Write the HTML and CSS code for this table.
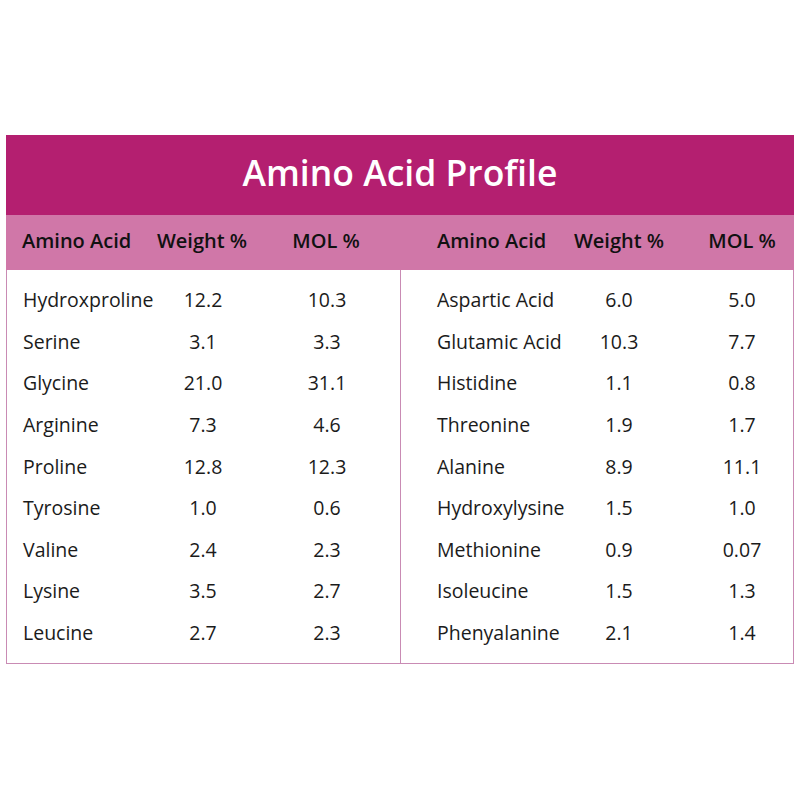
FILE: index.html
```html
<!DOCTYPE html>
<html>
<head>
<meta charset="utf-8">
<link rel="stylesheet" href="styles.css">
</head>
<body>
<div class="card">
  <div class="title">Amino Acid Profile</div>
  <div class="heads">
    <div class="grid grid-left">
      <div>Amino Acid</div><div class="num">Weight %</div><div class="num">MOL %</div>
    </div>
    <div class="grid grid-right">
      <div>Amino Acid</div><div class="num">Weight %</div><div class="num">MOL %</div>
    </div>
  </div>
  <div class="body">
    <div class="half">
      <div class="grid grid-left row"><div>Hydroxproline</div><div class="num">12.2</div><div class="num">10.3</div></div>
      <div class="grid grid-left row"><div>Serine</div><div class="num">3.1</div><div class="num">3.3</div></div>
      <div class="grid grid-left row"><div>Glycine</div><div class="num">21.0</div><div class="num">31.1</div></div>
      <div class="grid grid-left row"><div>Arginine</div><div class="num">7.3</div><div class="num">4.6</div></div>
      <div class="grid grid-left row"><div>Proline</div><div class="num">12.8</div><div class="num">12.3</div></div>
      <div class="grid grid-left row"><div>Tyrosine</div><div class="num">1.0</div><div class="num">0.6</div></div>
      <div class="grid grid-left row"><div>Valine</div><div class="num">2.4</div><div class="num">2.3</div></div>
      <div class="grid grid-left row"><div>Lysine</div><div class="num">3.5</div><div class="num">2.7</div></div>
      <div class="grid grid-left row"><div>Leucine</div><div class="num">2.7</div><div class="num">2.3</div></div>
    </div>
    <div class="half half-right">
      <div class="grid grid-right row"><div>Aspartic Acid</div><div class="num">6.0</div><div class="num">5.0</div></div>
      <div class="grid grid-right row"><div>Glutamic Acid</div><div class="num">10.3</div><div class="num">7.7</div></div>
      <div class="grid grid-right row"><div>Histidine</div><div class="num">1.1</div><div class="num">0.8</div></div>
      <div class="grid grid-right row"><div>Threonine</div><div class="num">1.9</div><div class="num">1.7</div></div>
      <div class="grid grid-right row"><div>Alanine</div><div class="num">8.9</div><div class="num">11.1</div></div>
      <div class="grid grid-right row"><div>Hydroxylysine</div><div class="num">1.5</div><div class="num">1.0</div></div>
      <div class="grid grid-right row"><div>Methionine</div><div class="num">0.9</div><div class="num">0.07</div></div>
      <div class="grid grid-right row"><div>Isoleucine</div><div class="num">1.5</div><div class="num">1.3</div></div>
      <div class="grid grid-right row"><div>Phenyalanine</div><div class="num">2.1</div><div class="num">1.4</div></div>
    </div>
  </div>
</div>
</body>
</html>
```
FILE: styles.css
```css
html, body {
  margin: 0;
  padding: 0;
  background: #ffffff;
}
body {
  font-family: "Open Sans", "Noto Sans", sans-serif;
  color: #1b1b1b;
}
.card {
  box-sizing: border-box;
  width: 788px;
  margin: 135px 0 0 6px;
}
.title {
  height: 80px;
  background: #b41f70;
  color: #ffffff;
  font-size: 35.5px;
  font-weight: 600;
  display: flex;
  align-items: center;
  justify-content: center;
  padding-bottom: 7px;
  box-sizing: border-box;
}
.heads {
  height: 55px;
  background: #d077a8;
  display: grid;
  grid-template-columns: 394px 394px;
  align-items: center;
  font-size: 20px;
  font-weight: 600;
  color: #111111;
  padding-bottom: 4px;
  box-sizing: border-box;
}
.grid {
  display: grid;
  grid-template-columns: 106px 100px 100px;
  column-gap: 24px;
  white-space: nowrap;
}
.grid-left {
  padding-left: 16px;
}
.grid-right {
  padding-left: 37px;
  grid-template-columns: 109px 100px 100px;
  column-gap: 23px;
}
.num {
  text-align: center;
}
.body {
  display: grid;
  grid-template-columns: 393px 393px;
  border: 1px solid #c98bb4;
  border-top: none;
  font-size: 19.5px;
}
.half {
  padding: 9px 0 10px;
}
.half-right {
  border-left: 1px solid #c98bb4;
}
.half-right .grid-right {
  padding-left: 36px;
}
.row {
  height: 41.6px;
  align-items: center;
}
```
